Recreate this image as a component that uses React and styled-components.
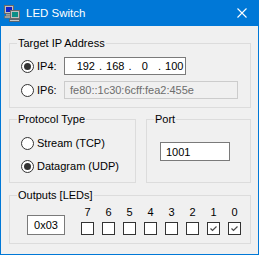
import React from 'react';
import styled, { createGlobalStyle } from 'styled-components';

const Global = createGlobalStyle`
  html, body { margin: 0; padding: 0; background: #f0f0f0; }
  body { font-family: "Liberation Sans", Arial, sans-serif; font-size: 11px; color: #000; }
  * { box-sizing: border-box; }
`;

const Window = styled.div`
  width: 259px;
  height: 255px;
  display: flex;
  flex-direction: column;
  background: #f0f0f0;
  border: 1px solid #0078d7;
  border-top: none;
`;

const TitleBar = styled.div`
  height: 26px;
  flex: none;
  background: #0078d7;
  display: flex;
  align-items: center;
  padding-left: 3px;
  color: #fff;
`;

const TitleText = styled.span`
  font-family: "Segoe UI", "Liberation Sans", Arial, sans-serif;
  font-size: 11.5px;
  margin-left: 6px;
  flex: 1;
`;

const CloseIcon = styled.svg`
  margin-right: 11px;
  display: block;
`;

const Body = styled.div`
  flex: 1;
  display: flex;
  flex-direction: column;
  padding: 11px 7px 0 8px;
`;

const GroupBox = styled.fieldset`
  margin: 0;
  margin-top: ${p => p.$top || 0}px;
  padding: 0;
  min-width: 0;
  border: 1px solid #dcdcdc;
  width: ${p => (p.$w ? `${p.$w}px` : 'auto')};
  flex: ${p => (p.$grow ? 1 : 'none')};
`;

const Legend = styled.legend`
  margin-left: 7px;
  padding: 0 1px;
  line-height: 13px;
  font-size: 11px;
`;

const GroupContent = styled.div`
  display: flex;
  flex-direction: ${p => p.$dir || 'column'};
  gap: ${p => p.$gap || 0}px;
  padding: ${p => p.$pad};
  align-items: ${p => p.$align || 'stretch'};
`;

const Row = styled.div`
  display: flex;
  align-items: center;
  height: 18px;
`;

const SplitRow = styled.div`
  display: flex;
  gap: 10px;
  margin-top: 5px;
`;

const RadioCircle = styled.span`
  width: 13px;
  height: 13px;
  border: 1px solid #333;
  border-radius: 50%;
  background: #fff;
  display: flex;
  align-items: center;
  justify-content: center;
  margin-right: 3px;
  flex: none;
  &::after {
    content: '';
    width: 7px;
    height: 7px;
    border-radius: 50%;
    background: ${p => (p.$checked ? '#333' : 'transparent')};
  }
`;

const Label = styled.span`
  width: ${p => (p.$w ? `${p.$w}px` : 'auto')};
  flex: none;
  white-space: nowrap;
`;

const TextBox = styled.div`
  width: ${p => p.$w}px;
  height: ${p => p.$h || 18}px;
  border: 1px solid ${p => (p.$disabled ? '#cccccc' : '#7a7a7a')};
  background: ${p => (p.$disabled ? '#f0f0f0' : '#fff')};
  color: ${p => (p.$disabled ? '#6d6d6d' : '#000')};
  display: flex;
  align-items: center;
  justify-content: ${p => (p.$center ? 'center' : 'flex-start')};
  padding-left: ${p => (p.$center ? 0 : 5)}px;
  flex: none;
  white-space: nowrap;
`;

const IpField = styled.span`
  width: 22px;
  text-align: center;
`;

const IpDot = styled.span`
  width: 8px;
  text-align: center;
`;

const Bits = styled.div`
  display: flex;
  gap: 8px;
`;

const BitColumn = styled.div`
  display: flex;
  flex-direction: column;
  align-items: center;
  gap: 3px;
  width: 13px;
`;

const BitNumber = styled.span`
  line-height: 13px;
`;

const CheckBox = styled.span`
  width: 13px;
  height: 13px;
  border: 1px solid #333;
  background: #fff;
  display: flex;
  align-items: center;
  justify-content: center;
`;

function Radio({ checked, label, w }) {
  return (
    <>
      <RadioCircle $checked={checked} />
      <Label $w={w}>{label}</Label>
    </>
  );
}

function AppIcon() {
  return (
    <svg width="16" height="17" viewBox="0 0 16 17">
      <rect x="0.5" y="0.5" width="9" height="8" fill="#c0c0c0" stroke="#6a6a6a" />
      <rect x="2" y="2" width="6" height="5" fill="#1020c8" />
      <rect x="2" y="9" width="6" height="2" fill="#a0a0a0" />
      <rect x="0.5" y="11" width="7" height="2" fill="#c0c0c0" stroke="#6a6a6a" strokeWidth="0.8" />
      <rect x="6.5" y="5.5" width="9" height="8" fill="#c0c0c0" stroke="#6a6a6a" />
      <rect x="8" y="7" width="6" height="5" fill="#0a8f86" />
      <rect x="5.5" y="14.5" width="10" height="2" fill="#c8c8c8" stroke="#5a5a5a" strokeWidth="0.8" />
    </svg>
  );
}

const bits = [
  { n: 7, on: false },
  { n: 6, on: false },
  { n: 5, on: false },
  { n: 4, on: false },
  { n: 3, on: false },
  { n: 2, on: false },
  { n: 1, on: true },
  { n: 0, on: true },
];

export default function App() {
  return (
    <>
      <Global />
      <Window>
        <TitleBar>
          <AppIcon />
          <TitleText>LED Switch</TitleText>
          <CloseIcon width="10" height="10" viewBox="0 0 10 10">
            <path d="M0.5 0.5 L9.5 9.5 M9.5 0.5 L0.5 9.5" stroke="#fff" strokeWidth="1.1" />
          </CloseIcon>
        </TitleBar>
        <Body>
          <GroupBox>
            <Legend>Target IP Address</Legend>
            <GroupContent $gap={6} $pad="7px 0 8px 11px">
              <Row>
                <Radio checked label="IP4:" w={27} />
                <TextBox $w={122}>
                  <IpField style={{ marginLeft: 5 }}>192</IpField>
                  <IpDot>.</IpDot>
                  <IpField>168</IpField>
                  <IpDot>.</IpDot>
                  <IpField>0</IpField>
                  <IpDot>.</IpDot>
                  <IpField>100</IpField>
                </TextBox>
              </Row>
              <Row>
                <Radio label="IP6:" w={27} />
                <TextBox $w={174} $disabled>fe80::1c30:6cff:fea2:455e</TextBox>
              </Row>
            </GroupContent>
          </GroupBox>
          <SplitRow>
            <GroupBox $w={127}>
              <Legend>Protocol Type</Legend>
              <GroupContent $gap={5} $pad="8px 0 7px 11px">
                <Row>
                  <Radio label="Stream (TCP)" />
                </Row>
                <Row>
                  <Radio checked label="Datagram (UDP)" />
                </Row>
              </GroupContent>
            </GroupBox>
            <GroupBox $grow>
              <Legend>Port</Legend>
              <GroupContent $pad="16px 0 0 13px">
                <TextBox $w={70} $h={19}>1001</TextBox>
              </GroupContent>
            </GroupBox>
          </SplitRow>
          <GroupBox $top={6}>
            <Legend>Outputs [LEDs]</Legend>
            <GroupContent $dir="row" $gap={16} $align="flex-end" $pad="4px 0 8px 17px">
              <TextBox $w={38} $h={20} $center>0x03</TextBox>
              <Bits>
                {bits.map(b => (
                  <BitColumn key={b.n}>
                    <BitNumber>{b.n}</BitNumber>
                    <CheckBox>
                      {b.on && (
                        <svg width="11" height="11" viewBox="0 0 11 11">
                          <polyline points="2.5,5.5 4.5,7.5 8.5,3.5" fill="none" stroke="#4a4a4a" strokeWidth="1.2" />
                        </svg>
                      )}
                    </CheckBox>
                  </BitColumn>
                ))}
              </Bits>
            </GroupContent>
          </GroupBox>
        </Body>
      </Window>
    </>
  );
}
